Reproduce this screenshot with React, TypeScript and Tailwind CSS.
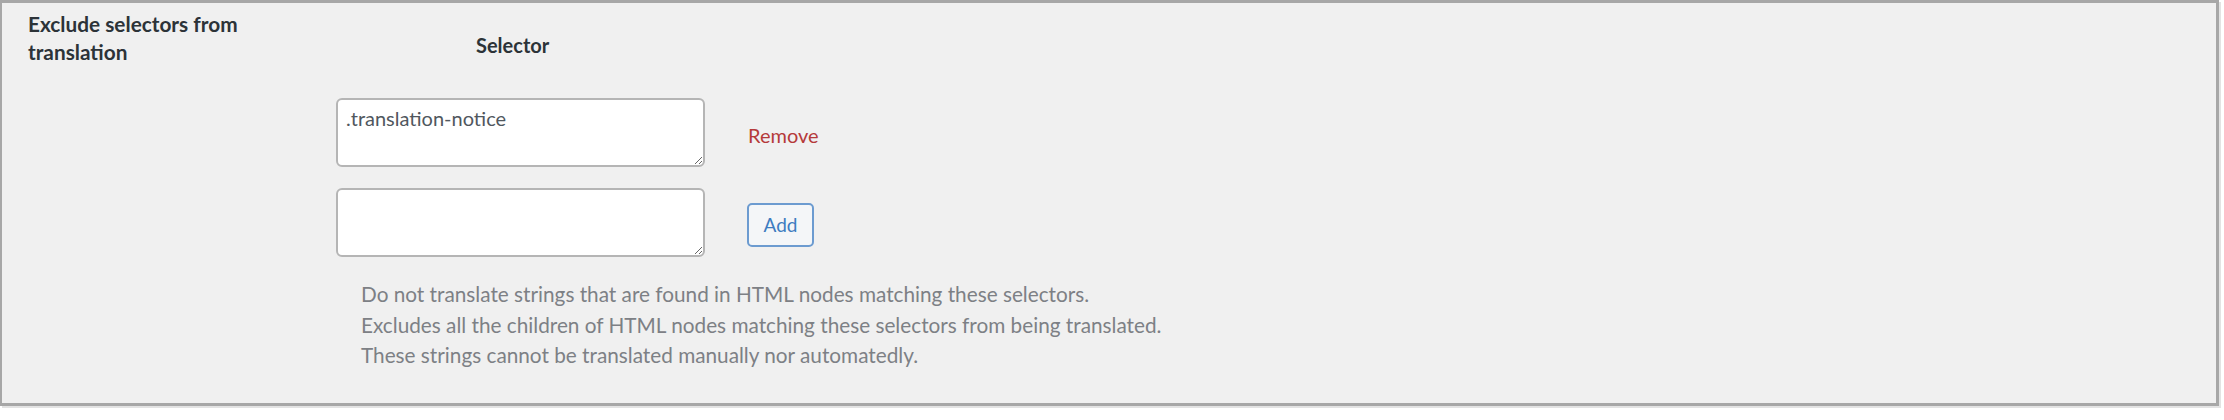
import { useState } from "react";

interface SelectorRow {
  id: number;
  value: string;
}

export default function App() {
  const [rows] = useState<SelectorRow[]>([{ id: 1, value: ".translation-notice" }]);

  return (
    <div className="min-h-screen bg-white font-['Lato','Liberation_Sans',sans-serif]">
      <div className="flex w-[2219px] h-[406px] bg-[#f0f0f0] border-t-[3px] border-l-2 border-r-[3px] border-b-[3px] border-[#a7a7a7] shadow-[2px_2px_0_0_#e3e3e3]">
        {/* label column */}
        <div className="w-[334px] shrink-0 pl-[26px] pt-[7px]">
          <h2 className="w-[240px] text-[20.8px] leading-[28px] font-bold text-[#2c3338]">
            Exclude selectors from translation
          </h2>
        </div>

        {/* field column */}
        <div className="flex flex-col">
          <div className="mt-[28px] w-[369px] pl-[140px] text-[20px] leading-[28px] font-bold text-[#2c3338]">
            Selector
          </div>

          <div className="mt-[39px] flex flex-col gap-[21px]">
            {rows.map((row) => (
              <div key={row.id} className="flex items-center">
                <textarea
                  readOnly
                  defaultValue={row.value}
                  className="w-[369px] h-[69px] rounded-[6px] border-2 border-[#b5b5b5] bg-white pl-[8px] pt-[4px] text-[20px] leading-[28px] text-[#50575e] outline-none"
                />
                <button className="ml-[43px] mt-[5px] text-[20px] leading-[28px] text-[#b53a3a]">
                  Remove
                </button>
              </div>
            ))}

            <div className="flex items-center">
              <textarea
                readOnly
                defaultValue=""
                className="w-[369px] h-[69px] rounded-[6px] border-2 border-[#b5b5b5] bg-white pl-[8px] pt-[4px] text-[20px] leading-[28px] text-[#50575e] outline-none"
              />
              <button className="ml-[42px] mt-[5px] w-[67px] h-[44px] rounded-[5px] border-2 border-[#6c9bd0] bg-[#f4f6f8] text-[19px] text-[#3d7cc0]">
                Add
              </button>
            </div>
          </div>

          <div className="mt-[22px] pl-[25px] text-[20.75px] leading-[30.5px] text-[#7d8085]">
            <p>Do not translate strings that are found in HTML nodes matching these selectors.</p>
            <p>Excludes all the children of HTML nodes matching these selectors from being translated.</p>
            <p>These strings cannot be translated manually nor automatedly.</p>
          </div>
        </div>
      </div>
    </div>
  );
}
